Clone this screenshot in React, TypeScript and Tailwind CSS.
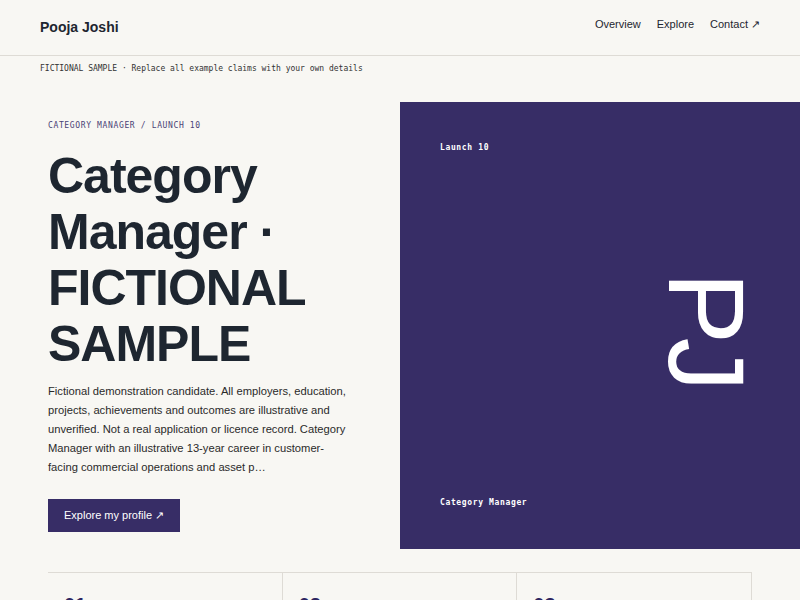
const sans = "font-['Liberation_Sans',Arial,sans-serif]"
const mono = "font-['DejaVu_Sans_Mono','Liberation_Mono',monospace]"

const navItems = ['Overview', 'Explore', 'Contact ↗']
const stats = ['01', '02', '03']

export default function App() {
  return (
    <div className={`min-h-screen bg-[#f8f7f3] text-[#1e2630] ${sans}`}>
      <header className="flex h-[56px] items-center justify-between border-b border-[#dedbd5] px-10">
        <span className="text-[14px] font-bold">Pooja Joshi</span>
        <nav className="-mt-[6px] flex items-center gap-4 text-[11px] text-[#1e2630]">
          {navItems.map((item) => (
            <a key={item} href="#">
              {item}
            </a>
          ))}
        </nav>
      </header>

      <div className={`h-[46px] px-10 pt-[7px] text-[8px] leading-[12px] text-[#333] ${mono}`}>
        FICTIONAL SAMPLE · Replace all example claims with your own details
      </div>

      <section className="flex h-[447px]">
        <div className="w-[400px] shrink-0 px-12 pt-[18px]">
          <p className={`text-[8px] leading-[12px] tracking-[0.08em] text-[#4a4376] ${mono}`}>
            CATEGORY MANAGER / LAUNCH 10
          </p>
          <h1 className="mt-4 text-[50px] font-bold leading-[56px] tracking-[-0.02em] text-[#1e2630]">
            Category Manager · FICTIONAL SAMPLE
          </h1>
          <p className="mt-[10px] w-[304px] text-[11.2px] leading-[19px] text-[#2a2a2a]">
            Fictional demonstration candidate. All employers, education, projects, achievements
            and outcomes are illustrative and unverified. Not a real application or licence
            record. Category Manager with an illustrative 13-year career in customer-facing
            commercial operations and asset p…
          </p>
          <a
            href="#"
            className="mt-[22px] inline-flex h-[33px] items-center bg-[#372d66] px-4 text-[11px] text-white"
          >
            Explore my profile ↗
          </a>
        </div>

        <div className="flex flex-1 flex-col justify-between bg-[#372d66] p-10 text-white">
          <span className={`text-[8px] font-bold leading-[12px] tracking-[0.08em] ${mono}`}>
            Launch 10
          </span>
          <span className="mt-[6px] self-end text-[108px] leading-none tracking-[-0.06em] [writing-mode:vertical-rl]">
            PJ
          </span>
          <span className={`text-[8px] font-bold leading-[12px] tracking-[0.08em] ${mono}`}>
            Category Manager
          </span>
        </div>
      </section>

      <div className="mx-12 mt-[23px] grid grid-cols-3 border-t border-[#dedbd5]">
        {stats.map((n) => (
          <div key={n} className="h-[80px] border-r border-[#dedbd5] px-4 pt-[17px]">
            <span className="text-[20px] font-bold text-[#2d2560]">{n}</span>
          </div>
        ))}
      </div>
    </div>
  )
}
